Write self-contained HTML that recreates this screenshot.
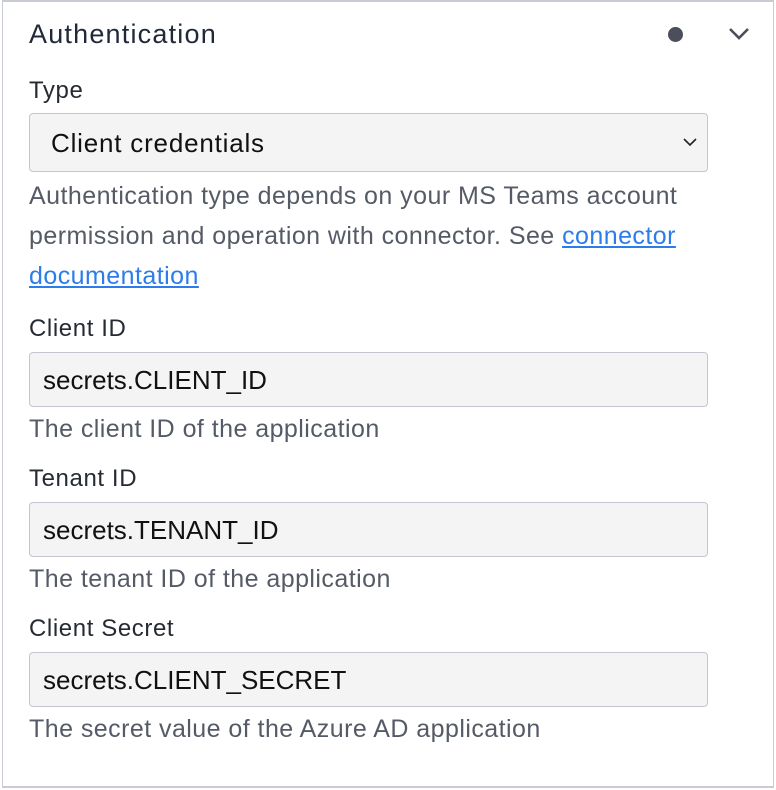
<!DOCTYPE html>
<html><head><style>
body{margin:0;width:776px;height:790px;background:#fff;font-family:"Liberation Sans",sans-serif;position:relative;overflow:hidden}
.frame{position:absolute;left:2px;top:0;width:770px;height:784px;border:1px solid #c9ccd3;border-top:2px solid #c9ccd3;border-bottom:2px solid #c9ccd3}
.t{position:absolute;left:29px;white-space:nowrap}
.h{font-size:27px;letter-spacing:1.2px;color:#1f2937;top:19px}
.lab{font-size:24px;letter-spacing:0.6px;color:#262b33}
.help{font-size:25px;letter-spacing:0.45px;color:#555b66}
.box{position:absolute;left:29px;width:677px;border:1px solid #c3c6cc;border-radius:4px;background:#f4f4f5}
.box span{position:absolute;left:13px;font-size:26px;color:#111}
a{color:#2b7de9;text-decoration:underline}
</style></head><body>
<div class="frame"></div>
<div class="t h">Authentication</div>
<div style="position:absolute;left:668px;top:27px;width:15px;height:15px;border-radius:50%;background:#4b4f5c"></div>
<svg style="position:absolute;left:728px;top:27px" width="22" height="14" viewBox="0 0 22 14"><path d="M2 2 L11 11 L20 2" fill="none" stroke="#4b4f5c" stroke-width="2.6"/></svg>
<div class="t lab" style="top:77px">Type</div>
<div class="box" style="top:113px;height:57px"><span style="top:14px;left:21px;letter-spacing:0.8px">Client credentials</span>
<svg style="position:absolute;left:653px;top:24px" width="14" height="9" viewBox="0 0 14 9"><path d="M1 1 L7 7 L13 1" fill="none" stroke="#222" stroke-width="1.6"/></svg></div>
<div class="t help" style="top:176px;line-height:40px">Authentication type depends on your MS Teams account<br>permission and operation with connector. See <a>connector</a><br><a>documentation</a></div>
<div class="t lab" style="top:315px">Client ID</div>
<div class="box" style="top:352px;height:53px"><span style="top:12px">secrets.CLIENT_ID</span></div>
<div class="t help" style="top:415px">The client ID of the application</div>
<div class="t lab" style="top:465px">Tenant ID</div>
<div class="box" style="top:502px;height:53px"><span style="top:12px">secrets.TENANT_ID</span></div>
<div class="t help" style="top:565px">The tenant ID of the application</div>
<div class="t lab" style="top:615px">Client Secret</div>
<div class="box" style="top:652px;height:53px"><span style="top:12px">secrets.CLIENT_SECRET</span></div>
<div class="t help" style="top:715px">The secret value of the Azure AD application</div>
</body></html>
